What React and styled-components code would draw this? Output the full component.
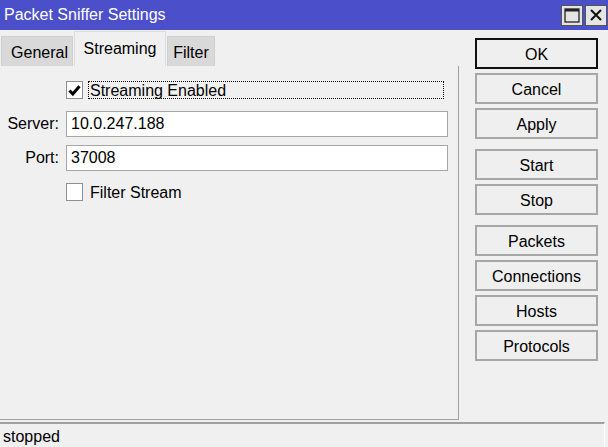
import React from "react";
import styled, { createGlobalStyle } from "styled-components";

const GlobalStyle = createGlobalStyle`
  html, body {
    margin: 0;
    padding: 0;
    background: #f0f0f0;
  }
  body {
    font-family: "Liberation Sans", Arial, sans-serif;
    font-size: 16px;
    color: #000;
  }
`;

const Window = styled.div`
  width: 608px;
  height: 447px;
  display: flex;
  flex-direction: column;
  background: #f0f0f0;
  overflow: hidden;
`;

const TitleBar = styled.div`
  height: 30px;
  background: #4c4fca;
  display: flex;
  align-items: center;
  justify-content: space-between;
  padding: 0 1px 0 4px;
  box-sizing: border-box;
  color: #fff;
`;

const Title = styled.span`
  font-size: 16px;
  line-height: 30px;
`;

const TitleButtons = styled.div`
  display: flex;
  gap: 2px;
`;

const TitleButton = styled.div`
  width: 22px;
  height: 21px;
  box-sizing: border-box;
  background: #e4e4e4;
  border: 1px solid #555;
  display: flex;
  align-items: center;
  justify-content: center;
`;

const Main = styled.div`
  flex: 1;
  display: flex;
  min-height: 0;
`;

const Left = styled.div`
  width: 459px;
  display: flex;
  flex-direction: column;
`;

const TabRow = styled.div`
  height: 36px;
  display: flex;
  align-items: flex-end;
  padding-left: 1px;
`;

const Tab = styled.div`
  box-sizing: border-box;
  width: ${p => p.$w}px;
  height: ${p => (p.$active ? "35px" : "30px")};
  margin-right: 1px;
  background: ${p => (p.$active ? "#f0f0f0" : "#d9d9d9")};
  border: 1px solid ${p => (p.$active ? "#dcdcdc" : "#d0d0d0")};
  border-bottom: none;
  display: flex;
  align-items: center;
  justify-content: center;
  font-size: 16px;
  padding-top: ${p => (p.$active ? "0" : "2px")};
  padding-left: ${p => p.$pl || 0}px;
`;

const Panel = styled.div`
  flex: 1;
  border-right: 1px solid #a0a0a0;
  border-bottom: 1px solid #a0a0a0;
  padding-top: 15px;
  display: flex;
  flex-direction: column;
`;

const Row = styled.div`
  display: flex;
  align-items: center;
  height: ${p => p.$h || 26}px;
  margin-bottom: ${p => p.$mb || 0}px;
`;

const Label = styled.div`
  width: 59px;
  text-align: right;
  margin-right: 7px;
  font-size: 16px;
`;

const Input = styled.div`
  width: 382px;
  height: 26px;
  box-sizing: border-box;
  background: #fff;
  border: 1px solid #a6a6a6;
  padding-left: 4px;
  display: flex;
  align-items: center;
  font-size: 16px;
`;

const CheckBox = styled.div`
  width: 17px;
  height: 18px;
  box-sizing: border-box;
  background: #fff;
  border: 1px solid #8f8f8f;
  display: flex;
  align-items: center;
  justify-content: center;
  margin-right: 5px;
`;

const CheckText = styled.div`
  height: 18px;
  box-sizing: border-box;
  display: flex;
  align-items: center;
  padding: 1px 0 0 1px;
  font-size: 16px;
  width: ${p => (p.$focus ? "356px" : "auto")};
  border: 1px ${p => (p.$focus ? "dotted #000" : "solid transparent")};
`;

const Right = styled.div`
  flex: 1;
  padding: 8px 0 0 16px;
  display: flex;
  flex-direction: column;
`;

const Group = styled.div`
  display: flex;
  flex-direction: column;
  gap: 4px;
  margin-bottom: 10px;
`;

const Button = styled.div`
  width: 123px;
  height: 31px;
  box-sizing: border-box;
  background: #efefef;
  border: ${p => (p.$default ? "2px solid #111" : "2px solid #a7a7a7")};
  display: flex;
  align-items: center;
  justify-content: center;
  padding-top: 2px;
  font-size: 16px;
`;

const StatusBar = styled.div`
  height: 25px;
  margin: 2px 3px 0 0;
  border-top: 2px solid #a0a0a0;
  border-right: 1px solid #fff;
  display: flex;
  align-items: center;
  padding: 3px 0 0 3px;
  box-sizing: border-box;
  font-size: 16px;
`;

const Check = () => (
  <svg width="13" height="13" viewBox="0 0 13 13">
    <path d="M1.5 6.5 L4.8 10 L11.5 2.2" fill="none" stroke="#000" strokeWidth="3" />
  </svg>
);

export default function App() {
  return (
    <>
      <GlobalStyle />
      <Window>
        <TitleBar>
          <Title>Packet Sniffer Settings</Title>
          <TitleButtons>
            <TitleButton>
              <svg width="16" height="15" viewBox="0 0 16 15">
                <rect x="1" y="1" width="14" height="13" fill="none" stroke="#222" strokeWidth="1.3" />
                <rect x="1" y="1" width="14" height="2.5" fill="#222" />
              </svg>
            </TitleButton>
            <TitleButton>
              <svg width="14" height="14" viewBox="0 0 14 14">
                <path d="M2 2 L12 12 M12 2 L2 12" stroke="#111" strokeWidth="2" />
              </svg>
            </TitleButton>
          </TitleButtons>
        </TitleBar>
        <Main>
          <Left>
            <TabRow>
              <Tab $w={72} $pl={5}>General</Tab>
              <Tab $w={92} $active>Streaming</Tab>
              <Tab $w={48}>Filter</Tab>
            </TabRow>
            <Panel>
              <Row $h={18} $mb={12}>
                <Label />
                <CheckBox>
                  <Check />
                </CheckBox>
                <CheckText $focus>Streaming Enabled</CheckText>
              </Row>
              <Row $mb={8}>
                <Label>Server:</Label>
                <Input>10.0.247.188</Input>
              </Row>
              <Row $mb={12}>
                <Label>Port:</Label>
                <Input>37008</Input>
              </Row>
              <Row $h={18}>
                <Label />
                <CheckBox />
                <CheckText>Filter Stream</CheckText>
              </Row>
            </Panel>
          </Left>
          <Right>
            <Group>
              <Button $default>OK</Button>
              <Button>Cancel</Button>
              <Button>Apply</Button>
            </Group>
            <Group>
              <Button>Start</Button>
              <Button>Stop</Button>
            </Group>
            <Group>
              <Button>Packets</Button>
              <Button>Connections</Button>
              <Button>Hosts</Button>
              <Button>Protocols</Button>
            </Group>
          </Right>
        </Main>
        <StatusBar>stopped</StatusBar>
      </Window>
    </>
  );
}
